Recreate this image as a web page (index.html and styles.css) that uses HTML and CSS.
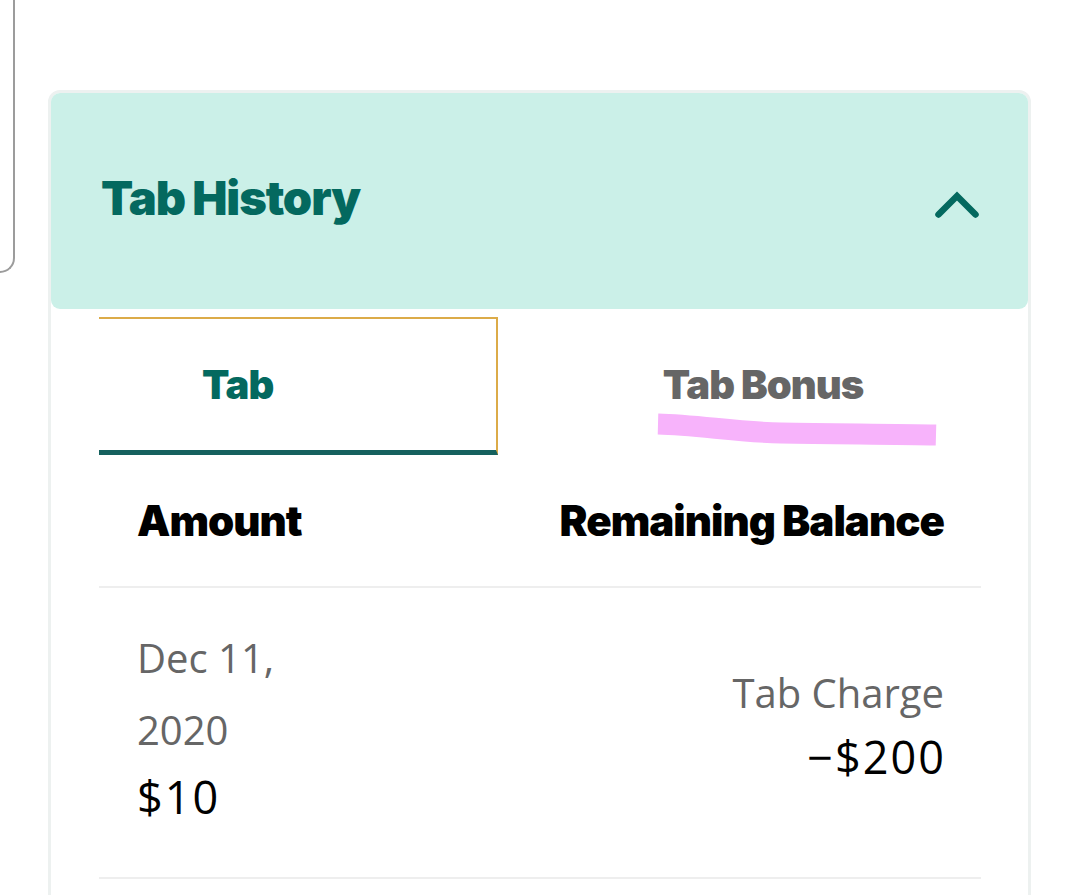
FILE: index.html
```html
<!DOCTYPE html>
<html lang="en">
<head>
<meta charset="utf-8">
<title>Tab History</title>
<link rel="stylesheet" href="styles.css">
</head>
<body>
  <div class="drawer"></div>
  <section class="card">
    <header class="card-header">
      <h2 class="card-title">Tab History</h2>
      <svg class="chevron" viewBox="0 0 44 30" width="44" height="30" aria-hidden="true">
        <polyline points="3.5,24.5 22,6 40.5,24.5" fill="none" stroke="#04695f" stroke-width="6.5" stroke-linecap="round" stroke-linejoin="miter"/>
      </svg>
    </header>
    <div class="tabs">
      <div class="tab tab-active">Tab</div>
      <div class="tab tab-inactive">
        Tab Bonus
        <svg class="marker" viewBox="0 0 280 34" width="280" height="34" aria-hidden="true">
          <path d="M1,11 C40,12 80,19 124,20 C180,21 240,21 279,22" fill="none" stroke="#f7b3fb" stroke-width="21"/>
        </svg>
      </div>
    </div>
    <div class="content">
      <div class="row row-head">
        <span class="col-title">Amount</span>
        <span class="col-title">Remaining Balance</span>
      </div>
      <div class="row row-data">
        <div class="cell-left">
          <div class="date">Dec 11, 2020</div>
          <div class="amount">$10</div>
        </div>
        <div class="cell-right">
          <div class="kind">Tab Charge</div>
          <div class="balance">&minus;$200</div>
        </div>
      </div>
    </div>
  </section>
</body>
</html>
```

FILE: styles.css
```css
html, body {
  margin: 0;
  padding: 0;
  background: #ffffff;
}
body {
  width: 1079px;
  height: 895px;
  overflow: hidden;
  display: flex;
  align-items: flex-start;
  font-family: "Open Sans", "Noto Sans", sans-serif;
}
.drawer {
  flex: 0 0 auto;
  width: 15px;
  height: 273px;
  box-sizing: border-box;
  border-right: 2px solid #9c9c9c;
  border-bottom: 2px solid #9c9c9c;
  border-bottom-right-radius: 17px;
}
.card {
  flex: 0 0 auto;
  margin-left: 33px;
  margin-top: 90px;
  width: 983px;
  box-sizing: border-box;
  border: 3px solid #edf1f0;
  border-radius: 12px;
  padding-bottom: 120px;
}
.card-header {
  height: 216px;
  background: #cbf0e8;
  border-radius: 9px;
  display: flex;
  align-items: center;
  justify-content: space-between;
  padding: 0 49px 0 50px;
}
.card-title {
  margin: 0 0 8px 0;
  font-family: Inter, Lato, sans-serif;
  font-weight: 900;
  font-size: 47px;
  letter-spacing: -1.1px;
  word-spacing: -1px;
  color: #04695f;
  line-height: 1;
}
.chevron {
  display: block;
  margin-top: 8px;
}
.tabs {
  display: flex;
  margin-top: 8px;
  margin-left: 48px;
  height: 138px;
}
.tab {
  box-sizing: border-box;
  height: 138px;
  display: flex;
  align-items: center;
  font-family: Inter, Lato, sans-serif;
  font-weight: 900;
  font-size: 40px;
  letter-spacing: -1px;
  word-spacing: 0;
}
.tab-active {
  width: 399px;
  padding-left: 103px;
  color: #04695f;
  border-top: 2px solid #dcab48;
  border-right: 2px solid #dcab48;
  border-bottom: 5px solid #15615e;
}
.tab-inactive {
  flex: 1;
  justify-content: center;
  color: #666666;
  position: relative;
  padding-bottom: 4px;
}
.marker {
  position: absolute;
  left: 159px;
  top: 96px;
}
.content {
  margin: 0 47px 0 48px;
}
.row {
  display: flex;
  justify-content: space-between;
  padding: 0 37px 0 38px;
  border-bottom: 2px solid #eeeeee;
}
.row-head {
  height: 133px;
  align-items: center;
  box-sizing: border-box;
}
.col-title {
  font-family: Inter, Lato, sans-serif;
  font-weight: 900;
  font-size: 42px;
  letter-spacing: -1px;
  word-spacing: 0;
  color: #000000;
}
.row-data {
  align-items: center;
  padding-top: 34px;
  padding-bottom: 49px;
}
.cell-left {
  width: 190px;
}
.date {
  font-size: 40px;
  line-height: 72px;
  color: #666666;
}
.amount {
  font-size: 45px;
  line-height: 62px;
  letter-spacing: 2px;
  color: #000000;
}
.cell-right {
  text-align: right;
}
.kind {
  font-size: 40px;
  line-height: 64px;
  color: #666666;
}
.balance {
  font-size: 45px;
  line-height: 64px;
  letter-spacing: 2px;
  margin-right: -2px;
  color: #000000;
}
```
